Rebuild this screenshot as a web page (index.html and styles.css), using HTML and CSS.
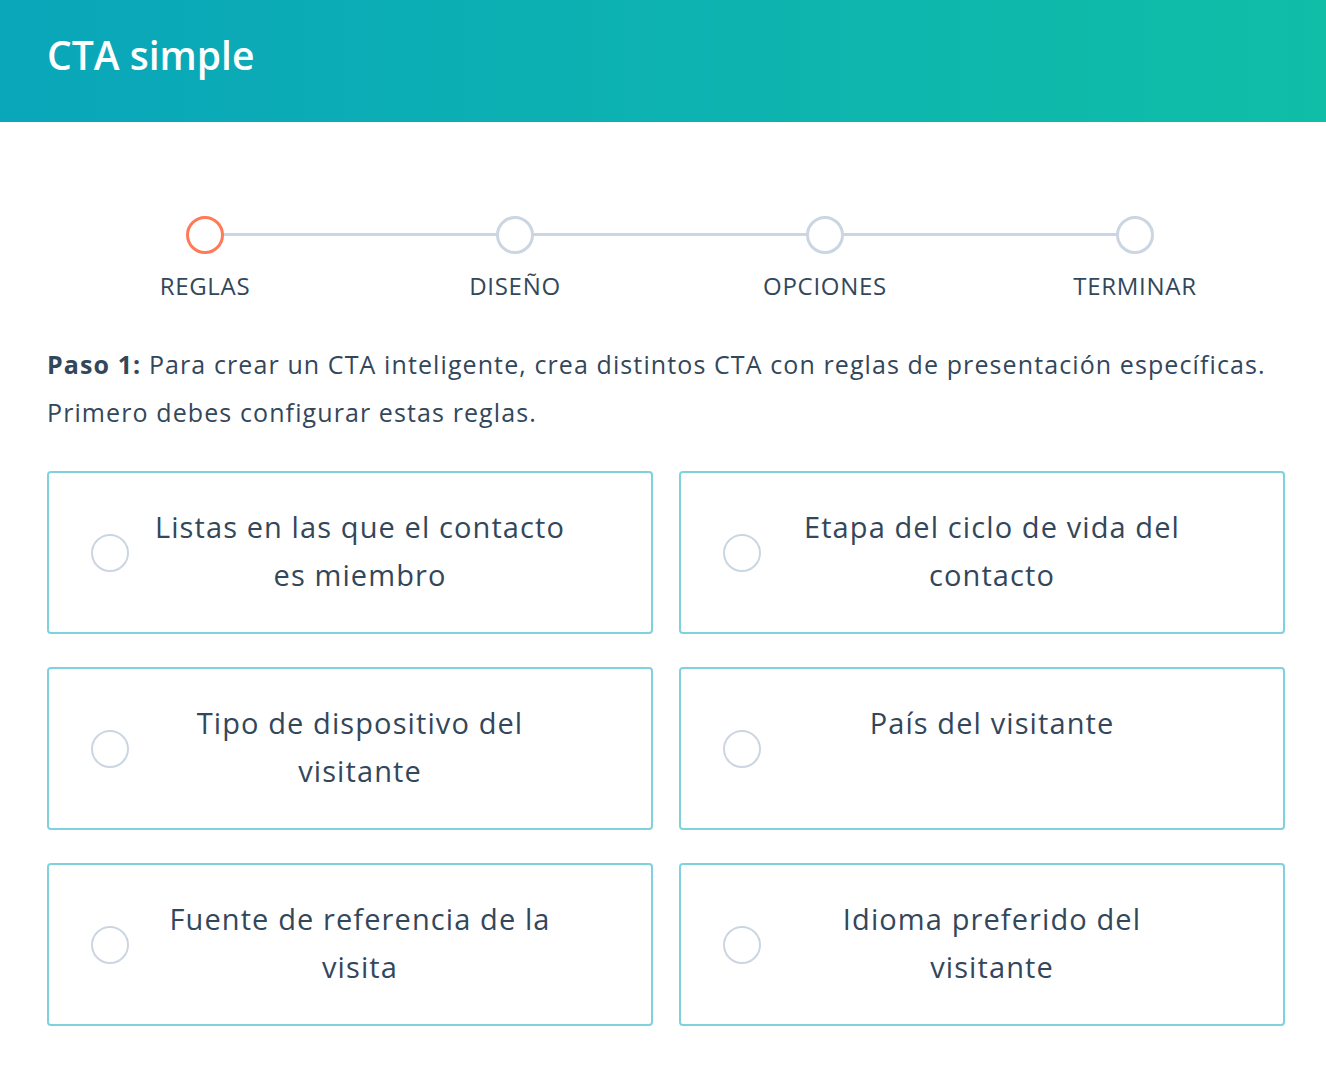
FILE: index.html
```html
<!DOCTYPE html>
<html lang="es">

<head>
    <meta charset="UTF-8">
    <meta name="viewport" content="width=device-width, initial-scale=1.0">
    <title>CTA simple</title>
    <link rel="stylesheet" href="styles.css">
</head>

<body>
    <header class="header">
        <h1>CTA simple</h1>
    </header>

    <main class="content">
        <!-- Wizard steps -->
        <ol class="steps">
            <li class="step active"><span class="dot"></span><span class="step-label">REGLAS</span></li>
            <li class="step"><span class="dot"></span><span class="step-label">DISEÑO</span></li>
            <li class="step"><span class="dot"></span><span class="step-label">OPCIONES</span></li>
            <li class="step"><span class="dot"></span><span class="step-label">TERMINAR</span></li>
        </ol>

        <p class="intro"><strong>Paso 1:</strong> Para crear un CTA inteligente, crea distintos CTA con reglas de presentación específicas. Primero debes configurar estas reglas.</p>

        <!-- Rule options -->
        <div class="rules">
            <label class="rule"><span class="radio"></span><span class="rule-text">Listas en las que el contacto es miembro</span></label>
            <label class="rule"><span class="radio"></span><span class="rule-text">Etapa del ciclo de vida del contacto</span></label>
            <label class="rule"><span class="radio"></span><span class="rule-text">Tipo de dispositivo del visitante</span></label>
            <label class="rule"><span class="radio"></span><span class="rule-text">País del visitante</span></label>
            <label class="rule"><span class="radio"></span><span class="rule-text">Fuente de referencia de la visita</span></label>
            <label class="rule"><span class="radio"></span><span class="rule-text">Idioma preferido del visitante</span></label>
        </div>
    </main>
</body>

</html>
```

FILE: styles.css
```css
body {
    margin: 0;
    font-family: "Open Sans", Lato, sans-serif;
    color: #33475b;
    background: #fff;
}

.header {
    height: 122px;
    padding: 0 47px;
    display: flex;
    align-items: center;
    background: linear-gradient(to right, #0aa6ba, #0fbea7);
}

.header h1 {
    margin: 0 0 14px;
    font-size: 39px;
    font-weight: 600;
    color: #fff;
}

.content {
    padding: 94px 41px 0 47px;
}

.steps {
    list-style: none;
    margin: 0 -5px 0 3px;
    padding: 0;
    display: grid;
    grid-template-columns: repeat(4, 1fr);
}

.step {
    position: relative;
    display: flex;
    flex-direction: column;
    align-items: center;
}

/* connector line to the next step */
.step::after {
    content: "";
    position: absolute;
    top: 17px;
    left: 50%;
    width: 100%;
    height: 3px;
    background: #cbd6e2;
}

.step:last-child::after {
    display: none;
}

.dot {
    position: relative;
    z-index: 1;
    width: 32px;
    height: 32px;
    border: 3px solid #cbd6e2;
    border-radius: 50%;
    background: #fff;
}

.step.active .dot {
    border-color: #ff7a59;
}

.step-label {
    margin-top: 16px;
    font-size: 24px;
    line-height: 32px;
    letter-spacing: 0.7px;
}

.intro {
    margin: 38px 0 0;
    font-size: 25px;
    line-height: 48px;
    letter-spacing: 1.1px;
}

.intro strong {
    font-weight: 700;
}

.rules {
    margin-top: 35px;
    display: grid;
    grid-template-columns: 1fr 1fr;
    column-gap: 26px;
    row-gap: 33px;
}

.rule {
    height: 163px;
    box-sizing: border-box;
    display: flex;
    align-items: flex-start;
    padding: 30px 84px 0 42px;
    border: 2px solid #7fd1de;
    border-radius: 4px;
    cursor: pointer;
}

.radio {
    flex: none;
    align-self: center;
    width: 34px;
    height: 34px;
    border: 2px solid #cbd6e2;
    border-radius: 50%;
    margin-top: -30px;
}

.rule-text {
    flex: 1;
    text-align: center;
    font-size: 29px;
    line-height: 48px;
    letter-spacing: 1.1px;
    margin-left: 24px;
}
```
